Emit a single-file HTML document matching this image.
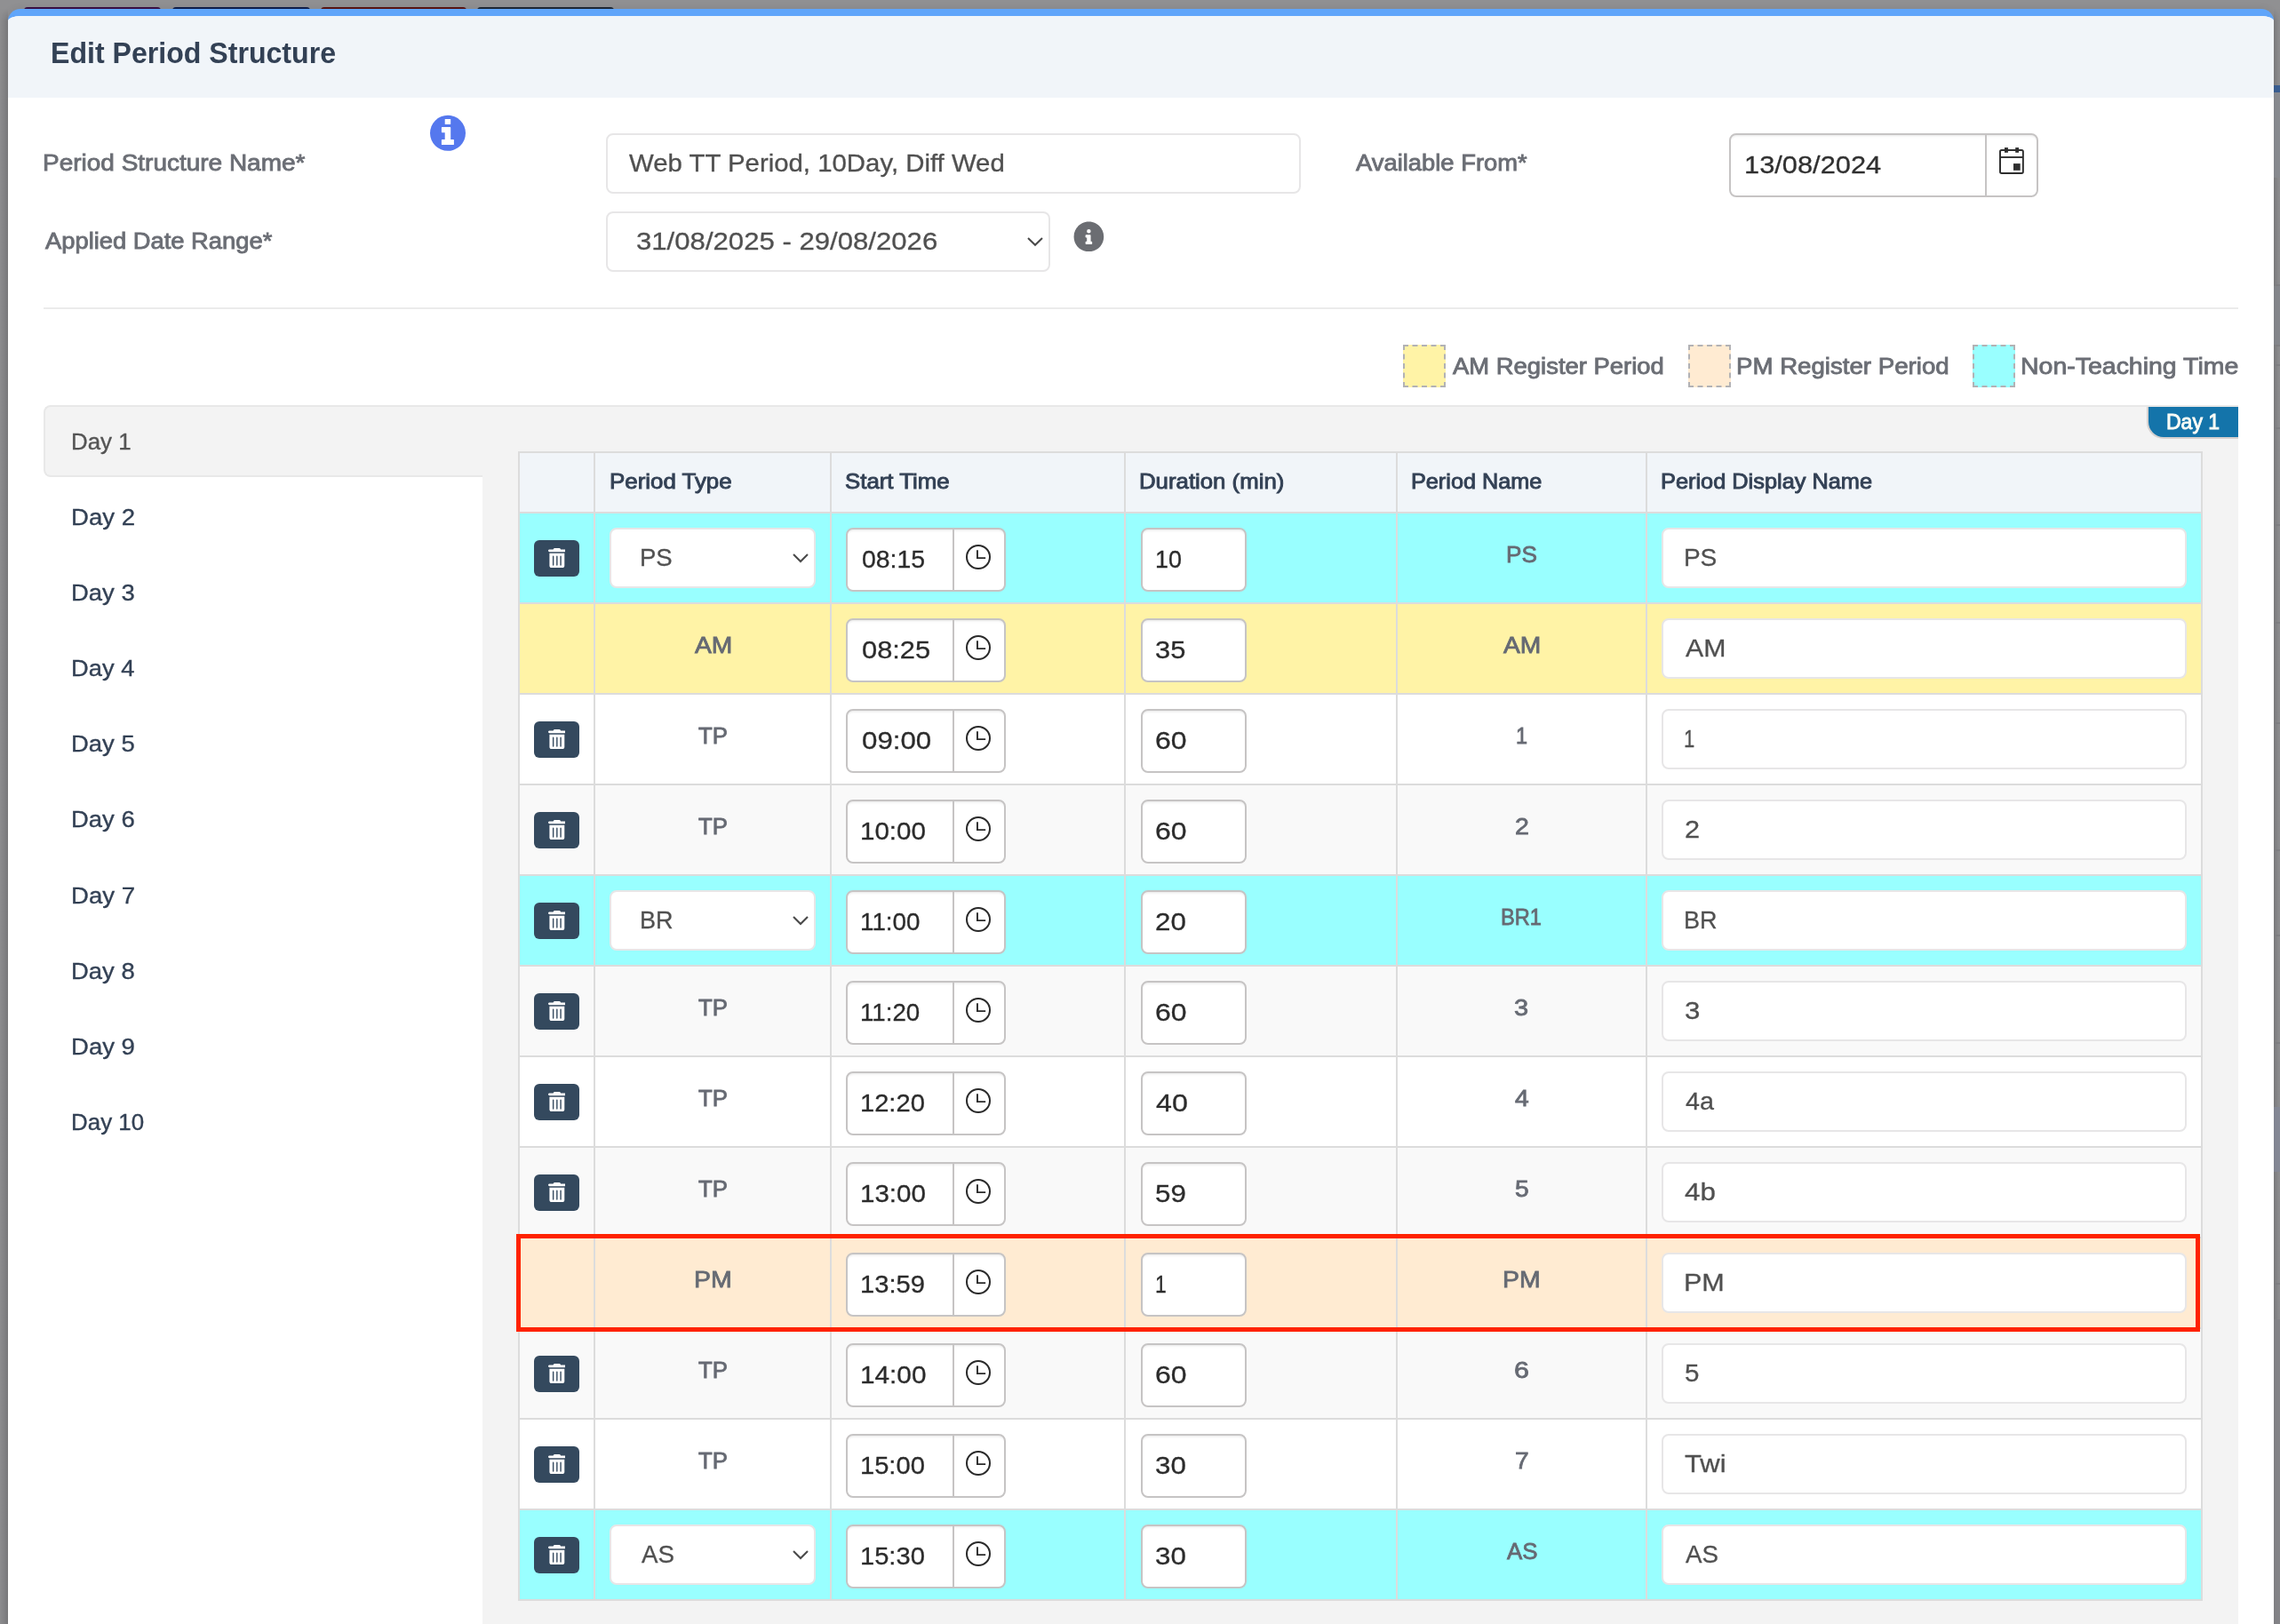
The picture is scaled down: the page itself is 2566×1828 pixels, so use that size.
<!DOCTYPE html><html lang="en"><head><meta charset="utf-8"><title>Edit Period Structure</title><style>
html,body{margin:0;padding:0}html{overflow:hidden}body{width:2566px;height:1828px;overflow:hidden;position:relative;background:#909092;font-family:"Liberation Sans",Arial,sans-serif}@media (max-width:1400px) and (min-resolution:2dppx){body{zoom:.5}}.t{position:absolute;white-space:nowrap;line-height:1;transform-origin:0 0}#root{position:absolute;left:0;top:0;width:2566px;height:1828px;overflow:hidden;will-change:transform}.a{position:absolute}.inp{position:absolute;box-sizing:border-box;background:#fff;border:2px solid #e7e6e7;border-radius:8px}.k{position:absolute;box-sizing:border-box;background:#fff;border:2px solid #c6c4c4;border-radius:8px;box-shadow:inset 0 3px 3px -2px rgba(0,0,0,.10)}.kd{position:absolute;width:2px;background:#c6c4c4}.btn{position:absolute;width:51px;height:41px;background:#34495e;border-radius:6px}
</style></head><body><div id="root">
<div style="position:absolute;left:27px;top:8px;width:154px;height:6px;background:#3a0f47;border-radius:4px 4px 0 0"></div>
<div style="position:absolute;left:194px;top:8px;width:155px;height:6px;background:#0f1f4d;border-radius:4px 4px 0 0"></div>
<div style="position:absolute;left:361px;top:8px;width:164px;height:6px;background:#5a1414;border-radius:4px 4px 0 0"></div>
<div style="position:absolute;left:537px;top:8px;width:154px;height:6px;background:#1f2937;border-radius:4px 4px 0 0"></div>
<div style="position:absolute;left:0px;top:10px;width:9px;height:1818px;background:linear-gradient(90deg,#8c8c8e 0%,#7d7d80 100%);-webkit-mask-image:linear-gradient(180deg,transparent 0,#000 14px)"></div>
<div style="position:absolute;left:2559px;top:10px;width:7px;height:1818px;background:linear-gradient(90deg,#7e7e81 0%,#8b8b8d 70%,#8e8e90 100%);-webkit-mask-image:linear-gradient(180deg,transparent 0,#000 14px)"></div>
<div style="position:absolute;left:2559px;top:96px;width:7px;height:8px;background:#3a5f93"></div>
<div style="position:absolute;left:2559px;top:104px;width:7px;height:96px;background:#8a8c91"></div>
<div style="position:absolute;left:2560px;top:320px;width:6px;height:2px;background:#808083"></div>
<div style="position:absolute;left:2560px;top:388px;width:6px;height:2px;background:#808083"></div>
<div style="position:absolute;left:2560px;top:410px;width:6px;height:2px;background:#808083"></div>
<div style="position:absolute;left:2560px;top:481px;width:6px;height:2px;background:#808083"></div>
<div style="position:absolute;left:2560px;top:590px;width:6px;height:2px;background:#808083"></div>
<div style="position:absolute;left:2560px;top:700px;width:6px;height:2px;background:#808083"></div>
<div style="position:absolute;left:2560px;top:813px;width:6px;height:2px;background:#808083"></div>
<div style="position:absolute;left:2560px;top:956px;width:6px;height:2px;background:#808083"></div>
<div style="position:absolute;left:2560px;top:1052px;width:6px;height:2px;background:#808083"></div>
<div style="position:absolute;left:2560px;top:1173px;width:6px;height:2px;background:#808083"></div>
<div style="position:absolute;left:2560px;top:1444px;width:6px;height:2px;background:#808083"></div>
<div style="position:absolute;left:2559px;top:322px;width:7px;height:66px;background:#86888d"></div>
<div style="position:absolute;left:2559px;top:1246px;width:7px;height:73px;background:#868a97"></div>
<div style="position:absolute;left:2559px;top:1485px;width:7px;height:343px;background:#858589"></div>
<div style="position:absolute;left:9px;top:10px;width:2550px;height:1840px;box-sizing:border-box;background:#fff;border-top:8px solid #60a5fa;border-radius:14px 14px 0 0;overflow:hidden;box-shadow:0 0 10px rgba(0,0,0,.09)"><div style="height:92px;background:#f1f5f9"></div></div>
<div class="t" style="left:56.61px;top:43.37px;font-size:33px;color:#334155;font-weight:700;transform:scaleX(0.9726);">Edit Period Structure</div>
<div class="t" style="left:48.47px;top:169.59px;font-size:26px;color:#6b6e75;transform:scaleX(1.0759);-webkit-text-stroke:0.85px #6b6e75;">Period Structure Name*</div>
<div class="t" style="left:50.62px;top:257.69px;font-size:26px;color:#6b6e75;transform:scaleX(1.0513);-webkit-text-stroke:0.85px #6b6e75;">Applied Date Range*</div>
<div class="t" style="left:1526.12px;top:170.29px;font-size:26px;color:#6b6e75;transform:scaleX(1.0526);-webkit-text-stroke:0.85px #6b6e75;">Available From*</div>
<svg width="44" height="44" viewBox="482 128 44 44" style="position:absolute;left:482px;top:128px"><circle cx="504" cy="149.850" r="20" fill="#5578ee"/><rect x="500.700" y="133.900" width="6.500" height="6.200" rx="0.500" fill="#fff"/><path d="M497.600 143.100H506.600a0.600 0.600 0 0 1 0.600 0.600V156.900H510.300a0.600 0.600 0 0 1 0.600 0.600V162.400a0.600 0.600 0 0 1-0.600 0.600H497.500a0.600 0.600 0 0 1-0.600-0.600V157.500a0.600 0.600 0 0 1 0.600-0.600H500.700V149.200H497.500a0.600 0.600 0 0 1-0.600-0.600V143.700a0.600 0.600 0 0 1 0.600-0.600z" fill="#fff"/></svg>
<div class="inp" style="position:absolute;left:682px;top:150px;width:782px;height:68px;"></div>
<div class="t" style="left:708.23px;top:170.30px;font-size:28px;color:#505050;transform:scaleX(1.0488);-webkit-text-stroke:0.3px #505050;">Web TT Period, 10Day, Diff Wed</div>
<div class="inp" style="position:absolute;left:682px;top:238px;width:500px;height:68px;"></div>
<div class="t" style="left:716.02px;top:258.20px;font-size:28px;color:#505050;transform:scaleX(1.1116);-webkit-text-stroke:0.3px #505050;">31/08/2025 - 29/08/2026</div>
<svg width="22.0" height="13.7" style="position:absolute;left:1153.8px;top:265.1px" viewBox="1153.8 265.1 22.0 13.7"><path d="M1156.8 268.1 L1164.8 275.8 L1172.8 268.1" fill="none" stroke="#4a4a4a" stroke-width="2.1" stroke-linecap="butt" stroke-linejoin="miter"/></svg>
<svg viewBox="0 0 512 512" width="34.79" height="34.79" style="position:absolute;left:1208.31px;top:248.71px"><path fill="#6b6d72" fill-rule="evenodd" d="M256 8C119.043 8 8 119.083 8 256c0 136.997 111.043 248 248 248s248-111.003 248-248C504 119.083 392.957 8 256 8zM256 132a33 33 0 1 0 0 66a33 33 0 1 0 0-66zM312 372c0 6.627-5.373 12-12 12h-88c-6.627 0-12-5.373-12-12v-24c0-6.627 5.373-12 12-12h12v-64h-12c-6.627 0-12-5.373-12-12v-24c0-6.627 5.373-12 12-12h64c6.627 0 12 5.373 12 12v100h12c6.627 0 12 5.373 12 12v24z"/></svg>
<div class="k" style="position:absolute;left:1946px;top:150px;width:348px;height:72px;"></div>
<div class="kd" style="position:absolute;left:2234px;top:152px;width:2px;height:68px;"></div>
<div class="t" style="left:1962.83px;top:172.10px;font-size:28px;color:#303030;transform:scaleX(1.1000);-webkit-text-stroke:0.3px #303030;">13/08/2024</div>
<svg width="34" height="36" viewBox="0 0 34 36" style="position:absolute;left:2247px;top:163px"><rect x="4" y="5.900" width="25.850" height="26.100" rx="1.700" fill="none" stroke="#2e2e2e" stroke-width="1.950"/><path d="M4 14H29.850" stroke="#2e2e2e" stroke-width="1.900"/><rect x="9" y="3.100" width="3.900" height="5.700" fill="#2e2e2e"/><rect x="21.200" y="3.100" width="3.800" height="5.700" fill="#2e2e2e"/><rect x="19" y="21.100" width="7.700" height="7.700" fill="#2e2e2e"/></svg>
<div style="position:absolute;left:49px;top:346px;width:2470px;height:2px;background:#ebebeb"></div>
<div style="position:absolute;left:1579px;top:388px;width:48px;height:48px;box-sizing:border-box;background:#fff3a6;border:2px dashed #b2b2b5"></div>
<div class="t" style="left:1635.02px;top:398.99px;font-size:26px;color:#6b6e75;transform:scaleX(1.0549);-webkit-text-stroke:0.85px #6b6e75;">AM Register Period</div>
<div style="position:absolute;left:1900px;top:388px;width:48px;height:48px;box-sizing:border-box;background:#ffebd2;border:2px dashed #b2b2b5"></div>
<div class="t" style="left:1953.99px;top:398.99px;font-size:26px;color:#6b6e75;transform:scaleX(1.0630);-webkit-text-stroke:0.85px #6b6e75;">PM Register Period</div>
<div style="position:absolute;left:2220px;top:388px;width:48px;height:48px;box-sizing:border-box;background:#99ffff;border:2px dashed #b2b2b5"></div>
<div class="t" style="left:2273.84px;top:398.99px;font-size:26px;color:#6b6e75;transform:scaleX(1.0952);-webkit-text-stroke:0.85px #6b6e75;">Non-Teaching Time</div>
<div style="position:absolute;left:543px;top:456px;width:1976px;height:1400px;background:#f3f3f3"></div>
<div style="position:absolute;left:543px;top:456px;width:1976px;height:2px;background:#e8e8e8"></div>
<div style="position:absolute;left:49px;top:456px;width:494px;height:81px;box-sizing:border-box;background:#f3f3f3;border:2px solid #e8e8e8;border-right:0;border-radius:8px 0 0 8px"></div>
<div class="t" style="left:80.36px;top:484.39px;font-size:26px;color:#555555;transform:scaleX(0.9958);-webkit-text-stroke:0.35px #555555;">Day 1</div>
<div class="t" style="left:80.23px;top:569.29px;font-size:26px;color:#334155;transform:scaleX(1.0609);-webkit-text-stroke:0.35px #334155;">Day 2</div>
<div class="t" style="left:80.24px;top:654.34px;font-size:26px;color:#334155;transform:scaleX(1.0568);-webkit-text-stroke:0.35px #334155;">Day 3</div>
<div class="t" style="left:80.25px;top:739.39px;font-size:26px;color:#334155;transform:scaleX(1.0508);-webkit-text-stroke:0.35px #334155;">Day 4</div>
<div class="t" style="left:80.24px;top:824.44px;font-size:26px;color:#334155;transform:scaleX(1.0568);-webkit-text-stroke:0.35px #334155;">Day 5</div>
<div class="t" style="left:80.24px;top:909.49px;font-size:26px;color:#334155;transform:scaleX(1.0568);-webkit-text-stroke:0.35px #334155;">Day 6</div>
<div class="t" style="left:80.23px;top:994.54px;font-size:26px;color:#334155;transform:scaleX(1.0609);-webkit-text-stroke:0.35px #334155;">Day 7</div>
<div class="t" style="left:80.24px;top:1079.59px;font-size:26px;color:#334155;transform:scaleX(1.0568);-webkit-text-stroke:0.35px #334155;">Day 8</div>
<div class="t" style="left:80.24px;top:1164.64px;font-size:26px;color:#334155;transform:scaleX(1.0589);-webkit-text-stroke:0.35px #334155;">Day 9</div>
<div class="t" style="left:80.35px;top:1249.69px;font-size:26px;color:#334155;transform:scaleX(0.9975);-webkit-text-stroke:0.35px #334155;">Day 10</div>
<div style="position:absolute;left:2416px;top:458px;width:103px;height:36px;background:#d6d1cf;border-radius:0 0 0 19px"></div>
<div style="position:absolute;left:2418px;top:458px;width:101px;height:34px;background:#1474aa;border-radius:0 0 0 17px"></div>
<div class="t" style="left:2438.31px;top:462.78px;font-size:24px;color:#fafcf6;transform:scaleX(0.9583);-webkit-text-stroke:0.9px #fafcf6;">Day 1</div>
<div style="position:absolute;left:583px;top:508px;width:1896px;height:1294px;background:#dcdcdc"></div>
<div style="position:absolute;left:585px;top:510px;width:1892px;height:66px;background:#f1f5f9"></div>
<div style="position:absolute;left:585px;top:578px;width:1892px;height:100px;background:#99ffff"></div>
<div style="position:absolute;left:585px;top:680px;width:1892px;height:100px;background:#fff3a6"></div>
<div style="position:absolute;left:585px;top:782px;width:1892px;height:100px;background:#ffffff"></div>
<div style="position:absolute;left:585px;top:884px;width:1892px;height:100px;background:#f9f9f9"></div>
<div style="position:absolute;left:585px;top:986px;width:1892px;height:100px;background:#99ffff"></div>
<div style="position:absolute;left:585px;top:1088px;width:1892px;height:100px;background:#f9f9f9"></div>
<div style="position:absolute;left:585px;top:1190px;width:1892px;height:100px;background:#ffffff"></div>
<div style="position:absolute;left:585px;top:1292px;width:1892px;height:100px;background:#f9f9f9"></div>
<div style="position:absolute;left:585px;top:1394px;width:1892px;height:100px;background:#ffebd2"></div>
<div style="position:absolute;left:585px;top:1496px;width:1892px;height:100px;background:#f9f9f9"></div>
<div style="position:absolute;left:585px;top:1598px;width:1892px;height:100px;background:#ffffff"></div>
<div style="position:absolute;left:585px;top:1700px;width:1892px;height:100px;background:#99ffff"></div>
<div style="position:absolute;left:668px;top:508px;width:2px;height:1294px;background:#dcdcdc"></div>
<div style="position:absolute;left:934px;top:508px;width:2px;height:1294px;background:#dcdcdc"></div>
<div style="position:absolute;left:1265px;top:508px;width:2px;height:1294px;background:#dcdcdc"></div>
<div style="position:absolute;left:1571px;top:508px;width:2px;height:1294px;background:#dcdcdc"></div>
<div style="position:absolute;left:1852px;top:508px;width:2px;height:1294px;background:#dcdcdc"></div>
<div class="t" style="left:686.13px;top:530.48px;font-size:24px;color:#334155;transform:scaleX(1.0781);-webkit-text-stroke:0.9px #334155;">Period Type</div>
<div class="t" style="left:951.27px;top:530.48px;font-size:24px;color:#334155;transform:scaleX(1.0757);-webkit-text-stroke:0.9px #334155;">Start Time</div>
<div class="t" style="left:1282.03px;top:530.48px;font-size:24px;color:#334155;transform:scaleX(1.0743);-webkit-text-stroke:0.9px #334155;">Duration (min)</div>
<div class="t" style="left:1587.57px;top:530.48px;font-size:24px;color:#334155;transform:scaleX(1.0515);-webkit-text-stroke:0.9px #334155;">Period Name</div>
<div class="t" style="left:1869.36px;top:530.48px;font-size:24px;color:#334155;transform:scaleX(1.0561);-webkit-text-stroke:0.9px #334155;">Period Display Name</div>
<div class="btn" style="left:601px;top:608px"><svg viewBox="0 0 448 512" width="19.7" height="22.5" style="position:absolute;left:15.7px;top:8.5px"><path fill="#fff" d="M135.2 17.7C140.6 6.8 151.7 0 163.8 0H284.2c12.1 0 23.2 6.8 28.6 17.7L320 32h96c17.7 0 32 14.3 32 32s-14.3 32-32 32H32C14.3 96 0 81.7 0 64S14.3 32 32 32h96l7.2-14.3zM32 128H416V448c0 35.3-28.7 64-64 64H96c-35.3 0-64-28.700-64-64V128zm96 64c-8.800 0-16 7.200-16 16V432c0 8.800 7.200 16 16 16s16-7.200 16-16V208c0-8.800-7.200-16-16-16zm96 0c-8.800 0-16 7.200-16 16V432c0 8.800 7.200 16 16 16s16-7.200 16-16V208c0-8.800-7.200-16-16-16zm96 0c-8.800 0-16 7.200-16 16V432c0 8.800 7.200 16 16 16s16-7.200 16-16V208c0-8.800-7.200-16-16-16z"/></svg></div>
<div class="inp" style="position:absolute;left:686px;top:594px;width:232px;height:68px;"></div>
<div class="t" style="left:720.03px;top:614.20px;font-size:28px;color:#505050;transform:scaleX(0.9838);-webkit-text-stroke:0.3px #505050;">PS</div>
<svg width="22.0" height="14.1" style="position:absolute;left:890.0px;top:620.7px" viewBox="890.0 620.7 22.0 14.1"><path d="M893 623.7 L901.0 631.8 L909 623.7" fill="none" stroke="#4a4a4a" stroke-width="2.1" stroke-linecap="butt" stroke-linejoin="miter"/></svg>
<div class="k" style="position:absolute;left:952px;top:594px;width:180px;height:72px;"></div>
<div class="kd" style="position:absolute;left:1072px;top:596px;width:2px;height:68px;"></div>
<div class="t" style="left:969.61px;top:616.10px;font-size:28px;color:#2b2b2b;transform:scaleX(1.0154);-webkit-text-stroke:0.3px #2b2b2b;">08:15</div>
<svg width="32.0" height="32.0" viewBox="1085.00 610.90 32.0 32.0" style="position:absolute;left:1085.00px;top:610.90px"><circle cx="1101.0" cy="626.9" r="13.0" fill="none" stroke="#2a2a2a" stroke-width="2.0"/><path d="M1099.95 619.10 V628.00 H1109.15" fill="none" stroke="#2a2a2a" stroke-width="1.9"/></svg>
<div class="k" style="position:absolute;left:1283.5px;top:594px;width:119.5px;height:72px;"></div>
<div class="t" style="left:1299.50px;top:615.60px;font-size:28px;color:#2b2b2b;transform:scaleX(0.9611);-webkit-text-stroke:0.3px #2b2b2b;">10</div>
<div class="t" style="left:1694.56px;top:611.19px;font-size:26px;color:#666a73;transform:scaleX(1.0070);-webkit-text-stroke:0.8px #666a73;">PS</div>
<div class="inp" style="position:absolute;left:1870px;top:594px;width:591px;height:68px;"></div>
<div class="t" style="left:1894.90px;top:613.80px;font-size:28px;color:#505050;-webkit-text-stroke:0.3px #505050;">PS</div>
<div class="t" style="left:781.90px;top:712.99px;font-size:26px;color:#666a73;transform:scaleX(1.0866);-webkit-text-stroke:0.8px #666a73;">AM</div>
<div class="k" style="position:absolute;left:952px;top:696px;width:180px;height:72px;"></div>
<div class="kd" style="position:absolute;left:1072px;top:698px;width:2px;height:68px;"></div>
<div class="t" style="left:969.53px;top:718.10px;font-size:28px;color:#2b2b2b;transform:scaleX(1.1007);-webkit-text-stroke:0.3px #2b2b2b;">08:25</div>
<svg width="32.0" height="32.0" viewBox="1085.00 712.90 32.0 32.0" style="position:absolute;left:1085.00px;top:712.90px"><circle cx="1101.0" cy="728.9" r="13.0" fill="none" stroke="#2a2a2a" stroke-width="2.0"/><path d="M1099.95 721.10 V730.00 H1109.15" fill="none" stroke="#2a2a2a" stroke-width="1.9"/></svg>
<div class="k" style="position:absolute;left:1283.5px;top:696px;width:119.5px;height:72px;"></div>
<div class="t" style="left:1300.33px;top:717.60px;font-size:28px;color:#2b2b2b;transform:scaleX(1.1003);-webkit-text-stroke:0.3px #2b2b2b;">35</div>
<div class="t" style="left:1692.40px;top:713.19px;font-size:26px;color:#666a73;transform:scaleX(1.0866);-webkit-text-stroke:0.8px #666a73;">AM</div>
<div class="inp" style="position:absolute;left:1870px;top:696px;width:591px;height:68px;"></div>
<div class="t" style="left:1897.03px;top:715.80px;font-size:28px;color:#505050;transform:scaleX(1.0804);-webkit-text-stroke:0.3px #505050;">AM</div>
<div class="btn" style="left:601px;top:812px"><svg viewBox="0 0 448 512" width="19.7" height="22.5" style="position:absolute;left:15.7px;top:8.5px"><path fill="#fff" d="M135.2 17.7C140.6 6.8 151.7 0 163.8 0H284.2c12.1 0 23.2 6.8 28.6 17.7L320 32h96c17.7 0 32 14.3 32 32s-14.3 32-32 32H32C14.3 96 0 81.7 0 64S14.3 32 32 32h96l7.2-14.3zM32 128H416V448c0 35.3-28.7 64-64 64H96c-35.3 0-64-28.700-64-64V128zm96 64c-8.800 0-16 7.200-16 16V432c0 8.800 7.200 16 16 16s16-7.200 16-16V208c0-8.800-7.200-16-16-16zm96 0c-8.800 0-16 7.200-16 16V432c0 8.800 7.200 16 16 16s16-7.200 16-16V208c0-8.800-7.200-16-16-16zm96 0c-8.800 0-16 7.200-16 16V432c0 8.800 7.200 16 16 16s16-7.200 16-16V208c0-8.800-7.200-16-16-16z"/></svg></div>
<div class="t" style="left:785.93px;top:814.99px;font-size:26px;color:#666a73;transform:scaleX(0.9891);-webkit-text-stroke:0.8px #666a73;">TP</div>
<div class="k" style="position:absolute;left:952px;top:798px;width:180px;height:72px;"></div>
<div class="kd" style="position:absolute;left:1072px;top:800px;width:2px;height:68px;"></div>
<div class="t" style="left:969.51px;top:820.10px;font-size:28px;color:#2b2b2b;transform:scaleX(1.1162);-webkit-text-stroke:0.3px #2b2b2b;">09:00</div>
<svg width="32.0" height="32.0" viewBox="1085.00 814.90 32.0 32.0" style="position:absolute;left:1085.00px;top:814.90px"><circle cx="1101.0" cy="830.9" r="13.0" fill="none" stroke="#2a2a2a" stroke-width="2.0"/><path d="M1099.95 823.10 V832.00 H1109.15" fill="none" stroke="#2a2a2a" stroke-width="1.9"/></svg>
<div class="k" style="position:absolute;left:1283.5px;top:798px;width:119.5px;height:72px;"></div>
<div class="t" style="left:1300.00px;top:819.60px;font-size:28px;color:#2b2b2b;transform:scaleX(1.1429);-webkit-text-stroke:0.3px #2b2b2b;">60</div>
<div class="t" style="left:1705.60px;top:815.19px;font-size:26px;color:#666a73;transform:scaleX(0.9046);-webkit-text-stroke:0.8px #666a73;">1</div>
<div class="inp" style="position:absolute;left:1870px;top:798px;width:591px;height:68px;"></div>
<div class="t" style="left:1895.44px;top:817.80px;font-size:28px;color:#505050;transform:scaleX(0.7887);-webkit-text-stroke:0.3px #505050;">1</div>
<div class="btn" style="left:601px;top:914px"><svg viewBox="0 0 448 512" width="19.7" height="22.5" style="position:absolute;left:15.7px;top:8.5px"><path fill="#fff" d="M135.2 17.7C140.6 6.8 151.7 0 163.8 0H284.2c12.1 0 23.2 6.8 28.6 17.7L320 32h96c17.7 0 32 14.3 32 32s-14.3 32-32 32H32C14.3 96 0 81.7 0 64S14.3 32 32 32h96l7.2-14.3zM32 128H416V448c0 35.3-28.7 64-64 64H96c-35.3 0-64-28.700-64-64V128zm96 64c-8.800 0-16 7.200-16 16V432c0 8.800 7.200 16 16 16s16-7.200 16-16V208c0-8.800-7.200-16-16-16zm96 0c-8.800 0-16 7.200-16 16V432c0 8.800 7.200 16 16 16s16-7.200 16-16V208c0-8.800-7.200-16-16-16zm96 0c-8.800 0-16 7.200-16 16V432c0 8.800 7.200 16 16 16s16-7.200 16-16V208c0-8.800-7.200-16-16-16z"/></svg></div>
<div class="t" style="left:785.93px;top:916.99px;font-size:26px;color:#666a73;transform:scaleX(0.9891);-webkit-text-stroke:0.8px #666a73;">TP</div>
<div class="k" style="position:absolute;left:952px;top:900px;width:180px;height:72px;"></div>
<div class="kd" style="position:absolute;left:1072px;top:902px;width:2px;height:68px;"></div>
<div class="t" style="left:968.02px;top:922.10px;font-size:28px;color:#2b2b2b;transform:scaleX(1.0555);-webkit-text-stroke:0.3px #2b2b2b;">10:00</div>
<svg width="32.0" height="32.0" viewBox="1085.00 916.90 32.0 32.0" style="position:absolute;left:1085.00px;top:916.90px"><circle cx="1101.0" cy="932.9" r="13.0" fill="none" stroke="#2a2a2a" stroke-width="2.0"/><path d="M1099.95 925.10 V934.00 H1109.15" fill="none" stroke="#2a2a2a" stroke-width="1.9"/></svg>
<div class="k" style="position:absolute;left:1283.5px;top:900px;width:119.5px;height:72px;"></div>
<div class="t" style="left:1300.00px;top:921.60px;font-size:28px;color:#2b2b2b;transform:scaleX(1.1429);-webkit-text-stroke:0.3px #2b2b2b;">60</div>
<div class="t" style="left:1704.62px;top:917.19px;font-size:26px;color:#666a73;transform:scaleX(1.0966);-webkit-text-stroke:0.8px #666a73;">2</div>
<div class="inp" style="position:absolute;left:1870px;top:900px;width:591px;height:68px;"></div>
<div class="t" style="left:1895.66px;top:919.80px;font-size:28px;color:#505050;transform:scaleX(1.0958);-webkit-text-stroke:0.3px #505050;">2</div>
<div class="btn" style="left:601px;top:1016px"><svg viewBox="0 0 448 512" width="19.7" height="22.5" style="position:absolute;left:15.7px;top:8.5px"><path fill="#fff" d="M135.2 17.7C140.6 6.8 151.7 0 163.8 0H284.2c12.1 0 23.2 6.8 28.6 17.7L320 32h96c17.7 0 32 14.3 32 32s-14.3 32-32 32H32C14.3 96 0 81.7 0 64S14.3 32 32 32h96l7.2-14.3zM32 128H416V448c0 35.3-28.7 64-64 64H96c-35.3 0-64-28.700-64-64V128zm96 64c-8.800 0-16 7.200-16 16V432c0 8.800 7.200 16 16 16s16-7.200 16-16V208c0-8.800-7.200-16-16-16zm96 0c-8.800 0-16 7.200-16 16V432c0 8.800 7.200 16 16 16s16-7.200 16-16V208c0-8.800-7.200-16-16-16zm96 0c-8.800 0-16 7.200-16 16V432c0 8.800 7.200 16 16 16s16-7.200 16-16V208c0-8.800-7.200-16-16-16z"/></svg></div>
<div class="inp" style="position:absolute;left:686px;top:1002px;width:232px;height:68px;"></div>
<div class="t" style="left:720.07px;top:1022.20px;font-size:28px;color:#505050;transform:scaleX(0.9648);-webkit-text-stroke:0.3px #505050;">BR</div>
<svg width="22.0" height="14.1" style="position:absolute;left:890.0px;top:1028.7px" viewBox="890.0 1028.7 22.0 14.1"><path d="M893 1031.7 L901.0 1039.8 L909 1031.7" fill="none" stroke="#4a4a4a" stroke-width="2.1" stroke-linecap="butt" stroke-linejoin="miter"/></svg>
<div class="k" style="position:absolute;left:952px;top:1002px;width:180px;height:72px;"></div>
<div class="kd" style="position:absolute;left:1072px;top:1004px;width:2px;height:68px;"></div>
<div class="t" style="left:968.14px;top:1024.10px;font-size:28px;color:#2b2b2b;transform:scaleX(0.9931);-webkit-text-stroke:0.3px #2b2b2b;">11:00</div>
<svg width="32.0" height="32.0" viewBox="1085.00 1018.90 32.0 32.0" style="position:absolute;left:1085.00px;top:1018.90px"><circle cx="1101.0" cy="1034.9" r="13.0" fill="none" stroke="#2a2a2a" stroke-width="2.0"/><path d="M1099.95 1027.10 V1036.00 H1109.15" fill="none" stroke="#2a2a2a" stroke-width="1.9"/></svg>
<div class="k" style="position:absolute;left:1283.5px;top:1002px;width:119.5px;height:72px;"></div>
<div class="t" style="left:1300.03px;top:1023.60px;font-size:28px;color:#2b2b2b;transform:scaleX(1.1188);-webkit-text-stroke:0.3px #2b2b2b;">20</div>
<div class="t" style="left:1689.08px;top:1019.19px;font-size:26px;color:#666a73;transform:scaleX(0.9095);-webkit-text-stroke:0.8px #666a73;">BR1</div>
<div class="inp" style="position:absolute;left:1870px;top:1002px;width:591px;height:68px;"></div>
<div class="t" style="left:1894.97px;top:1021.80px;font-size:28px;color:#505050;transform:scaleX(0.9648);-webkit-text-stroke:0.3px #505050;">BR</div>
<div class="btn" style="left:601px;top:1118px"><svg viewBox="0 0 448 512" width="19.7" height="22.5" style="position:absolute;left:15.7px;top:8.5px"><path fill="#fff" d="M135.2 17.7C140.6 6.8 151.7 0 163.8 0H284.2c12.1 0 23.2 6.8 28.6 17.7L320 32h96c17.7 0 32 14.3 32 32s-14.3 32-32 32H32C14.3 96 0 81.7 0 64S14.3 32 32 32h96l7.2-14.3zM32 128H416V448c0 35.3-28.7 64-64 64H96c-35.3 0-64-28.700-64-64V128zm96 64c-8.800 0-16 7.200-16 16V432c0 8.800 7.200 16 16 16s16-7.200 16-16V208c0-8.800-7.200-16-16-16zm96 0c-8.800 0-16 7.200-16 16V432c0 8.800 7.200 16 16 16s16-7.200 16-16V208c0-8.800-7.200-16-16-16zm96 0c-8.800 0-16 7.200-16 16V432c0 8.800 7.200 16 16 16s16-7.200 16-16V208c0-8.800-7.200-16-16-16z"/></svg></div>
<div class="t" style="left:785.93px;top:1120.99px;font-size:26px;color:#666a73;transform:scaleX(0.9891);-webkit-text-stroke:0.8px #666a73;">TP</div>
<div class="k" style="position:absolute;left:952px;top:1104px;width:180px;height:72px;"></div>
<div class="kd" style="position:absolute;left:1072px;top:1106px;width:2px;height:68px;"></div>
<div class="t" style="left:968.15px;top:1126.10px;font-size:28px;color:#2b2b2b;transform:scaleX(0.9885);-webkit-text-stroke:0.3px #2b2b2b;">11:20</div>
<svg width="32.0" height="32.0" viewBox="1085.00 1120.90 32.0 32.0" style="position:absolute;left:1085.00px;top:1120.90px"><circle cx="1101.0" cy="1136.9" r="13.0" fill="none" stroke="#2a2a2a" stroke-width="2.0"/><path d="M1099.95 1129.10 V1138.00 H1109.15" fill="none" stroke="#2a2a2a" stroke-width="1.9"/></svg>
<div class="k" style="position:absolute;left:1283.5px;top:1104px;width:119.5px;height:72px;"></div>
<div class="t" style="left:1300.00px;top:1125.60px;font-size:28px;color:#2b2b2b;transform:scaleX(1.1429);-webkit-text-stroke:0.3px #2b2b2b;">60</div>
<div class="t" style="left:1704.48px;top:1121.19px;font-size:26px;color:#666a73;transform:scaleX(1.1157);-webkit-text-stroke:0.8px #666a73;">3</div>
<div class="inp" style="position:absolute;left:1870px;top:1104px;width:591px;height:68px;"></div>
<div class="t" style="left:1895.91px;top:1123.80px;font-size:28px;color:#505050;transform:scaleX(1.1144);-webkit-text-stroke:0.3px #505050;">3</div>
<div class="btn" style="left:601px;top:1220px"><svg viewBox="0 0 448 512" width="19.7" height="22.5" style="position:absolute;left:15.7px;top:8.5px"><path fill="#fff" d="M135.2 17.7C140.6 6.8 151.7 0 163.8 0H284.2c12.1 0 23.2 6.8 28.6 17.7L320 32h96c17.7 0 32 14.3 32 32s-14.3 32-32 32H32C14.3 96 0 81.7 0 64S14.3 32 32 32h96l7.2-14.3zM32 128H416V448c0 35.3-28.7 64-64 64H96c-35.3 0-64-28.700-64-64V128zm96 64c-8.800 0-16 7.200-16 16V432c0 8.800 7.200 16 16 16s16-7.200 16-16V208c0-8.800-7.200-16-16-16zm96 0c-8.800 0-16 7.200-16 16V432c0 8.800 7.200 16 16 16s16-7.200 16-16V208c0-8.800-7.200-16-16-16zm96 0c-8.800 0-16 7.200-16 16V432c0 8.800 7.200 16 16 16s16-7.200 16-16V208c0-8.800-7.200-16-16-16z"/></svg></div>
<div class="t" style="left:785.93px;top:1222.99px;font-size:26px;color:#666a73;transform:scaleX(0.9891);-webkit-text-stroke:0.8px #666a73;">TP</div>
<div class="k" style="position:absolute;left:952px;top:1206px;width:180px;height:72px;"></div>
<div class="kd" style="position:absolute;left:1072px;top:1208px;width:2px;height:68px;"></div>
<div class="t" style="left:968.05px;top:1228.10px;font-size:28px;color:#2b2b2b;transform:scaleX(1.0391);-webkit-text-stroke:0.3px #2b2b2b;">12:20</div>
<svg width="32.0" height="32.0" viewBox="1085.00 1222.90 32.0 32.0" style="position:absolute;left:1085.00px;top:1222.90px"><circle cx="1101.0" cy="1238.9" r="13.0" fill="none" stroke="#2a2a2a" stroke-width="2.0"/><path d="M1099.95 1231.10 V1240.00 H1109.15" fill="none" stroke="#2a2a2a" stroke-width="1.9"/></svg>
<div class="k" style="position:absolute;left:1283.5px;top:1206px;width:119.5px;height:72px;"></div>
<div class="t" style="left:1300.85px;top:1227.60px;font-size:28px;color:#2b2b2b;transform:scaleX(1.1510);-webkit-text-stroke:0.3px #2b2b2b;">40</div>
<div class="t" style="left:1704.71px;top:1223.19px;font-size:26px;color:#666a73;transform:scaleX(1.0844);-webkit-text-stroke:0.8px #666a73;">4</div>
<div class="inp" style="position:absolute;left:1870px;top:1206px;width:591px;height:68px;"></div>
<div class="t" style="left:1896.51px;top:1225.80px;font-size:28px;color:#505050;transform:scaleX(1.0251);-webkit-text-stroke:0.3px #505050;">4a</div>
<div class="btn" style="left:601px;top:1322px"><svg viewBox="0 0 448 512" width="19.7" height="22.5" style="position:absolute;left:15.7px;top:8.5px"><path fill="#fff" d="M135.2 17.7C140.6 6.8 151.7 0 163.8 0H284.2c12.1 0 23.2 6.8 28.6 17.7L320 32h96c17.7 0 32 14.3 32 32s-14.3 32-32 32H32C14.3 96 0 81.7 0 64S14.3 32 32 32h96l7.2-14.3zM32 128H416V448c0 35.3-28.7 64-64 64H96c-35.3 0-64-28.700-64-64V128zm96 64c-8.800 0-16 7.200-16 16V432c0 8.800 7.200 16 16 16s16-7.200 16-16V208c0-8.800-7.200-16-16-16zm96 0c-8.800 0-16 7.200-16 16V432c0 8.800 7.200 16 16 16s16-7.200 16-16V208c0-8.800-7.200-16-16-16zm96 0c-8.800 0-16 7.200-16 16V432c0 8.800 7.200 16 16 16s16-7.200 16-16V208c0-8.800-7.200-16-16-16z"/></svg></div>
<div class="t" style="left:785.93px;top:1324.99px;font-size:26px;color:#666a73;transform:scaleX(0.9891);-webkit-text-stroke:0.8px #666a73;">TP</div>
<div class="k" style="position:absolute;left:952px;top:1308px;width:180px;height:72px;"></div>
<div class="kd" style="position:absolute;left:1072px;top:1310px;width:2px;height:68px;"></div>
<div class="t" style="left:968.02px;top:1330.10px;font-size:28px;color:#2b2b2b;transform:scaleX(1.0555);-webkit-text-stroke:0.3px #2b2b2b;">13:00</div>
<svg width="32.0" height="32.0" viewBox="1085.00 1324.90 32.0 32.0" style="position:absolute;left:1085.00px;top:1324.90px"><circle cx="1101.0" cy="1340.9" r="13.0" fill="none" stroke="#2a2a2a" stroke-width="2.0"/><path d="M1099.95 1333.10 V1342.00 H1109.15" fill="none" stroke="#2a2a2a" stroke-width="1.9"/></svg>
<div class="k" style="position:absolute;left:1283.5px;top:1308px;width:119.5px;height:72px;"></div>
<div class="t" style="left:1300.31px;top:1329.60px;font-size:28px;color:#2b2b2b;transform:scaleX(1.1188);-webkit-text-stroke:0.3px #2b2b2b;">59</div>
<div class="t" style="left:1704.70px;top:1325.19px;font-size:26px;color:#666a73;transform:scaleX(1.0854);-webkit-text-stroke:0.8px #666a73;">5</div>
<div class="inp" style="position:absolute;left:1870px;top:1308px;width:591px;height:68px;"></div>
<div class="t" style="left:1896.47px;top:1327.80px;font-size:28px;color:#505050;transform:scaleX(1.1188);-webkit-text-stroke:0.3px #505050;">4b</div>
<div class="t" style="left:780.66px;top:1426.99px;font-size:26px;color:#666a73;transform:scaleX(1.0942);-webkit-text-stroke:0.8px #666a73;">PM</div>
<div class="k" style="position:absolute;left:952px;top:1410px;width:180px;height:72px;"></div>
<div class="kd" style="position:absolute;left:1072px;top:1412px;width:2px;height:68px;"></div>
<div class="t" style="left:968.05px;top:1432.10px;font-size:28px;color:#2b2b2b;transform:scaleX(1.0400);-webkit-text-stroke:0.3px #2b2b2b;">13:59</div>
<svg width="32.0" height="32.0" viewBox="1085.00 1426.90 32.0 32.0" style="position:absolute;left:1085.00px;top:1426.90px"><circle cx="1101.0" cy="1442.9" r="13.0" fill="none" stroke="#2a2a2a" stroke-width="2.0"/><path d="M1099.95 1435.10 V1444.00 H1109.15" fill="none" stroke="#2a2a2a" stroke-width="1.9"/></svg>
<div class="k" style="position:absolute;left:1283.5px;top:1410px;width:119.5px;height:72px;"></div>
<div class="t" style="left:1299.78px;top:1431.60px;font-size:28px;color:#2b2b2b;transform:scaleX(0.8209);-webkit-text-stroke:0.3px #2b2b2b;">1</div>
<div class="t" style="left:1691.16px;top:1427.19px;font-size:26px;color:#666a73;transform:scaleX(1.0942);-webkit-text-stroke:0.8px #666a73;">PM</div>
<div class="inp" style="position:absolute;left:1870px;top:1410px;width:591px;height:68px;"></div>
<div class="t" style="left:1894.71px;top:1429.80px;font-size:28px;color:#505050;transform:scaleX(1.0909);-webkit-text-stroke:0.3px #505050;">PM</div>
<div class="btn" style="left:601px;top:1526px"><svg viewBox="0 0 448 512" width="19.7" height="22.5" style="position:absolute;left:15.7px;top:8.5px"><path fill="#fff" d="M135.2 17.7C140.6 6.8 151.7 0 163.8 0H284.2c12.1 0 23.2 6.8 28.6 17.7L320 32h96c17.7 0 32 14.3 32 32s-14.3 32-32 32H32C14.3 96 0 81.7 0 64S14.3 32 32 32h96l7.2-14.3zM32 128H416V448c0 35.3-28.7 64-64 64H96c-35.3 0-64-28.700-64-64V128zm96 64c-8.800 0-16 7.200-16 16V432c0 8.800 7.200 16 16 16s16-7.200 16-16V208c0-8.800-7.200-16-16-16zm96 0c-8.800 0-16 7.200-16 16V432c0 8.800 7.200 16 16 16s16-7.200 16-16V208c0-8.800-7.200-16-16-16zm96 0c-8.800 0-16 7.200-16 16V432c0 8.800 7.200 16 16 16s16-7.200 16-16V208c0-8.800-7.200-16-16-16z"/></svg></div>
<div class="t" style="left:785.93px;top:1528.99px;font-size:26px;color:#666a73;transform:scaleX(0.9891);-webkit-text-stroke:0.8px #666a73;">TP</div>
<div class="k" style="position:absolute;left:952px;top:1512px;width:180px;height:72px;"></div>
<div class="kd" style="position:absolute;left:1072px;top:1514px;width:2px;height:68px;"></div>
<div class="t" style="left:968.00px;top:1534.10px;font-size:28px;color:#2b2b2b;transform:scaleX(1.0629);-webkit-text-stroke:0.3px #2b2b2b;">14:00</div>
<svg width="32.0" height="32.0" viewBox="1085.00 1528.90 32.0 32.0" style="position:absolute;left:1085.00px;top:1528.90px"><circle cx="1101.0" cy="1544.9" r="13.0" fill="none" stroke="#2a2a2a" stroke-width="2.0"/><path d="M1099.95 1537.10 V1546.00 H1109.15" fill="none" stroke="#2a2a2a" stroke-width="1.9"/></svg>
<div class="k" style="position:absolute;left:1283.5px;top:1512px;width:119.5px;height:72px;"></div>
<div class="t" style="left:1300.00px;top:1533.60px;font-size:28px;color:#2b2b2b;transform:scaleX(1.1429);-webkit-text-stroke:0.3px #2b2b2b;">60</div>
<div class="t" style="left:1703.96px;top:1529.19px;font-size:26px;color:#666a73;transform:scaleX(1.1683);-webkit-text-stroke:0.8px #666a73;">6</div>
<div class="inp" style="position:absolute;left:1870px;top:1512px;width:591px;height:68px;"></div>
<div class="t" style="left:1895.97px;top:1531.80px;font-size:28px;color:#505050;transform:scaleX(1.0554);-webkit-text-stroke:0.3px #505050;">5</div>
<div class="btn" style="left:601px;top:1628px"><svg viewBox="0 0 448 512" width="19.7" height="22.5" style="position:absolute;left:15.7px;top:8.5px"><path fill="#fff" d="M135.2 17.7C140.6 6.8 151.7 0 163.8 0H284.2c12.1 0 23.2 6.8 28.6 17.7L320 32h96c17.7 0 32 14.3 32 32s-14.3 32-32 32H32C14.3 96 0 81.7 0 64S14.3 32 32 32h96l7.2-14.3zM32 128H416V448c0 35.3-28.7 64-64 64H96c-35.3 0-64-28.700-64-64V128zm96 64c-8.800 0-16 7.200-16 16V432c0 8.800 7.200 16 16 16s16-7.200 16-16V208c0-8.800-7.200-16-16-16zm96 0c-8.800 0-16 7.200-16 16V432c0 8.800 7.200 16 16 16s16-7.200 16-16V208c0-8.800-7.200-16-16-16zm96 0c-8.800 0-16 7.200-16 16V432c0 8.800 7.200 16 16 16s16-7.200 16-16V208c0-8.800-7.200-16-16-16z"/></svg></div>
<div class="t" style="left:785.93px;top:1630.99px;font-size:26px;color:#666a73;transform:scaleX(0.9891);-webkit-text-stroke:0.8px #666a73;">TP</div>
<div class="k" style="position:absolute;left:952px;top:1614px;width:180px;height:72px;"></div>
<div class="kd" style="position:absolute;left:1072px;top:1616px;width:2px;height:68px;"></div>
<div class="t" style="left:968.05px;top:1636.10px;font-size:28px;color:#2b2b2b;transform:scaleX(1.0391);-webkit-text-stroke:0.3px #2b2b2b;">15:00</div>
<svg width="32.0" height="32.0" viewBox="1085.00 1630.90 32.0 32.0" style="position:absolute;left:1085.00px;top:1630.90px"><circle cx="1101.0" cy="1646.9" r="13.0" fill="none" stroke="#2a2a2a" stroke-width="2.0"/><path d="M1099.95 1639.10 V1648.00 H1109.15" fill="none" stroke="#2a2a2a" stroke-width="1.9"/></svg>
<div class="k" style="position:absolute;left:1283.5px;top:1614px;width:119.5px;height:72px;"></div>
<div class="t" style="left:1300.31px;top:1635.60px;font-size:28px;color:#2b2b2b;transform:scaleX(1.1195);-webkit-text-stroke:0.3px #2b2b2b;">30</div>
<div class="t" style="left:1704.64px;top:1631.19px;font-size:26px;color:#666a73;transform:scaleX(1.0837);-webkit-text-stroke:0.8px #666a73;">7</div>
<div class="inp" style="position:absolute;left:1870px;top:1614px;width:591px;height:68px;"></div>
<div class="t" style="left:1896.47px;top:1633.80px;font-size:28px;color:#505050;transform:scaleX(1.1080);-webkit-text-stroke:0.3px #505050;">Twi</div>
<div class="btn" style="left:601px;top:1730px"><svg viewBox="0 0 448 512" width="19.7" height="22.5" style="position:absolute;left:15.7px;top:8.5px"><path fill="#fff" d="M135.2 17.7C140.6 6.8 151.7 0 163.8 0H284.2c12.1 0 23.2 6.8 28.6 17.7L320 32h96c17.7 0 32 14.3 32 32s-14.3 32-32 32H32C14.3 96 0 81.7 0 64S14.3 32 32 32h96l7.2-14.3zM32 128H416V448c0 35.3-28.7 64-64 64H96c-35.3 0-64-28.700-64-64V128zm96 64c-8.800 0-16 7.200-16 16V432c0 8.800 7.200 16 16 16s16-7.200 16-16V208c0-8.800-7.200-16-16-16zm96 0c-8.800 0-16 7.200-16 16V432c0 8.800 7.200 16 16 16s16-7.200 16-16V208c0-8.800-7.200-16-16-16zm96 0c-8.800 0-16 7.200-16 16V432c0 8.800 7.200 16 16 16s16-7.200 16-16V208c0-8.800-7.200-16-16-16z"/></svg></div>
<div class="inp" style="position:absolute;left:686px;top:1716px;width:232px;height:68px;"></div>
<div class="t" style="left:722.12px;top:1736.20px;font-size:28px;color:#505050;transform:scaleX(0.9896);-webkit-text-stroke:0.3px #505050;">AS</div>
<svg width="22.0" height="14.1" style="position:absolute;left:890.0px;top:1742.7px" viewBox="890.0 1742.7 22.0 14.1"><path d="M893 1745.7 L901.0 1753.8 L909 1745.7" fill="none" stroke="#4a4a4a" stroke-width="2.1" stroke-linecap="butt" stroke-linejoin="miter"/></svg>
<div class="k" style="position:absolute;left:952px;top:1716px;width:180px;height:72px;"></div>
<div class="kd" style="position:absolute;left:1072px;top:1718px;width:2px;height:68px;"></div>
<div class="t" style="left:968.05px;top:1738.10px;font-size:28px;color:#2b2b2b;transform:scaleX(1.0391);-webkit-text-stroke:0.3px #2b2b2b;">15:30</div>
<svg width="32.0" height="32.0" viewBox="1085.00 1732.90 32.0 32.0" style="position:absolute;left:1085.00px;top:1732.90px"><circle cx="1101.0" cy="1748.9" r="13.0" fill="none" stroke="#2a2a2a" stroke-width="2.0"/><path d="M1099.95 1741.10 V1750.00 H1109.15" fill="none" stroke="#2a2a2a" stroke-width="1.9"/></svg>
<div class="k" style="position:absolute;left:1283.5px;top:1716px;width:119.5px;height:72px;"></div>
<div class="t" style="left:1300.31px;top:1737.60px;font-size:28px;color:#2b2b2b;transform:scaleX(1.1195);-webkit-text-stroke:0.3px #2b2b2b;">30</div>
<div class="t" style="left:1695.77px;top:1733.19px;font-size:26px;color:#666a73;transform:scaleX(0.9949);-webkit-text-stroke:0.8px #666a73;">AS</div>
<div class="inp" style="position:absolute;left:1870px;top:1716px;width:591px;height:68px;"></div>
<div class="t" style="left:1897.02px;top:1735.80px;font-size:28px;color:#505050;transform:scaleX(0.9896);-webkit-text-stroke:0.3px #505050;">AS</div>
<div style="position:absolute;left:581px;top:1389px;width:1895px;height:110px;box-sizing:border-box;border:5px solid #ff2200"></div>
</div></body></html>
